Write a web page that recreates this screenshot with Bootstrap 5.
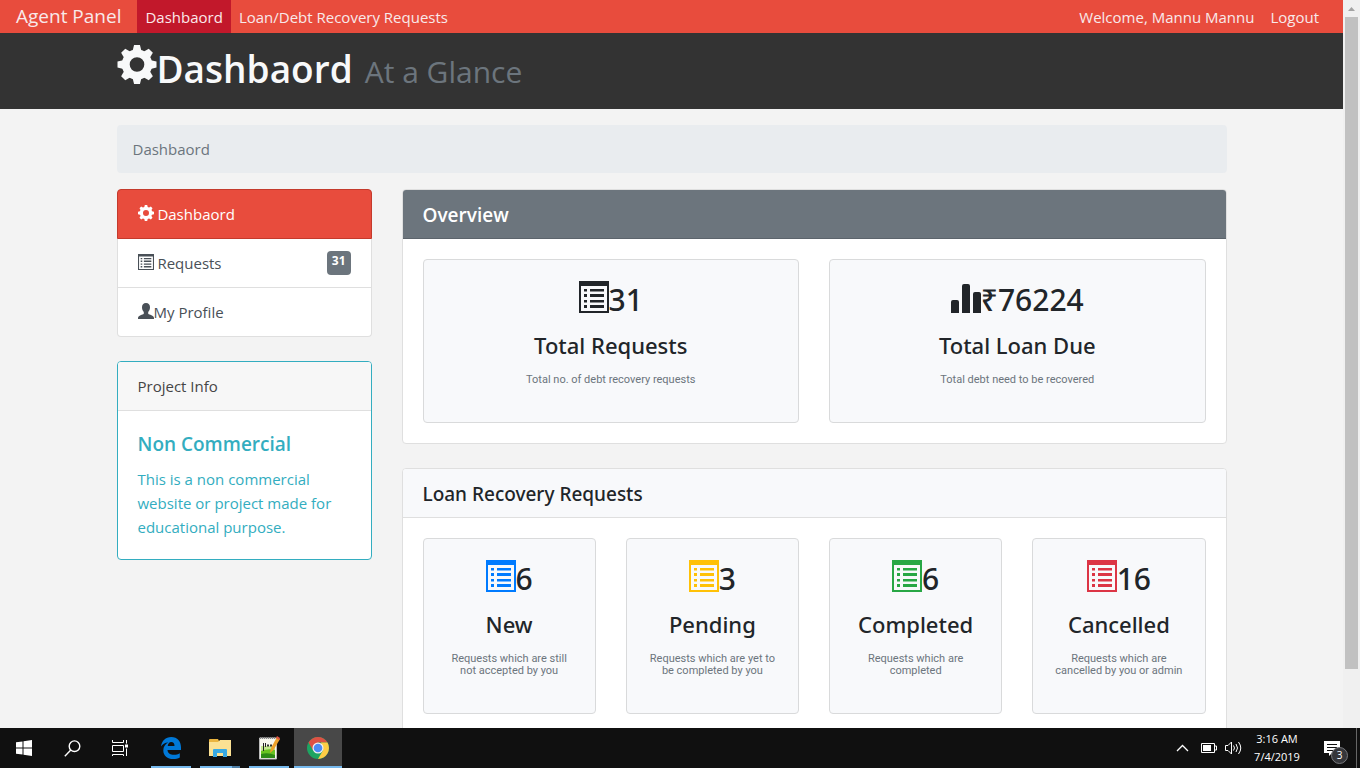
<!DOCTYPE html>
<html lang="en">
<head>
<meta charset="utf-8">
<meta name="viewport" content="width=device-width, initial-scale=1">
<title>Agent Panel</title>
<link href="https://cdn.jsdelivr.net/npm/bootstrap@5.3.0/dist/css/bootstrap.min.css" rel="stylesheet">
<style>
body{font-family:"Open Sans","Noto Sans",sans-serif;font-size:15px;line-height:24px;color:#212529;background:#f3f3f3}
.shell{height:100vh}
.viewport-area{min-height:0}
.page{min-width:0;overflow:hidden}
.page .container{--bs-gutter-x:30px}
.page .row{--bs-gutter-x:30px}
.topbar{background:#e84c3d;--bs-navbar-padding-y:0;--bs-navbar-padding-x:16px;height:33px}
.topbar .navbar-brand{font-size:19px;color:#f8e9ea;padding:0;margin-right:16px;line-height:35px}
.topbar .nav-link{color:#f8e9ea;padding:1px 8px 0;line-height:32px}
.topbar .nav-link.active{background:#c2182b;color:#fbe9ea}
.hero{background:#333;height:76px}
.hero h1{font-size:37px;line-height:48px;font-weight:600;color:#f8f9fa;padding-top:12px;margin:0}
.hero small{font-size:30px;font-weight:400;color:#6c757d;margin-left:12px}
.hero svg{width:40px;height:39px;align-self:flex-start}
.crumbs{background:#e9ecef;border-radius:4px;padding:12px 16px;margin:16px 0;color:#6c757d}
.crumbs .breadcrumb-item.active{color:#6c757d}
.side{--bs-list-group-item-padding-x:20px;--bs-list-group-item-padding-y:12px;--bs-list-group-border-radius:4px;--bs-list-group-border-color:#dfdfdf;--bs-list-group-active-bg:#e84c3d;--bs-list-group-active-border-color:#c43a2c;--bs-list-group-bg:#fff;margin-bottom:24px}
.side a{color:#495057}
.side svg{width:16px;height:16px;vertical-align:-1px}
.side .badge{font-size:12px;line-height:12px;padding:4px 5px 8px;border-radius:4px;background:#6c757d}
.panel{--bs-card-border-radius:4px;--bs-card-inner-border-radius:3px;--bs-card-border-color:#dfdfdf;--bs-card-cap-padding-x:20px;--bs-card-cap-padding-y:12px;--bs-card-spacer-x:20px;--bs-card-spacer-y:20px;margin-bottom:24px;--bs-card-bg:#fff}
.panel h2,.panel h3{font-size:19px;line-height:24px;margin:0}
.overview>.card-header,.recovery>.card-header{padding-top:13px;padding-bottom:11px}
.info{--bs-card-border-color:#33adc0;color:#33adc0}
.info .card-header{background:#f7f7f7;color:#454545;border-color:#dfdfdf}
.info h3{font-weight:600;line-height:26px;margin-bottom:10px}
.info p{margin-bottom:0}
.overview .card-header{background:#6c757d;color:#fff;border-color:#5c646c}
.overview .card-header h2{font-weight:600}
.soft,.recovery .card-header{background:#f8f9fb}
.recovery .card-header h2{font-family:"Noto Sans","Open Sans",sans-serif;font-weight:500}
.tile{--bs-card-border-radius:4px;--bs-card-border-color:#d9dadb;--bs-card-spacer-x:20px;--bs-card-spacer-y:20px;text-align:center;height:100%;font-family:"Noto Sans","Open Sans",sans-serif}
.tile .figure-line{font-size:30px;line-height:40px;font-weight:500;margin-bottom:10px;display:flex;justify-content:center}
.tile .figure-line svg{width:30px;height:32px;margin-top:1px}
.panel .tile h3{font-size:22px;line-height:30px;font-weight:500;margin-bottom:14px}
.tile p{font-family:Roboto,sans-serif;font-size:11px;line-height:12px;color:#6c757d;margin-bottom:16px}
.c-new svg{color:#007bff}.c-pend svg{color:#ffc107}.c-done svg{color:#28a745}.c-stop svg{color:#dc3545}
.scroller{width:17px;background:#f0f0f0;padding:0 2px;flex:none}
.scroller svg{display:block;width:13px;height:17px}
.scroller .thumb{height:calc(100% - 76px);background:#c1c1c1}
.taskbar{height:40px;background:#101010;color:#fff;flex:none}
.taskbar button{border:0;background:none;padding:0;width:48px;height:40px;color:#fff;display:flex;align-items:center;justify-content:center}
.taskbar .app{border-bottom:2px solid #76b9ed;width:40px;margin-left:9px;padding-top:2px}
.taskbar .app-first{margin-left:7px}
.taskbar .app-on{background:#484848;width:48px;margin-left:5px}
.taskbar .app-stack{border-image:linear-gradient(90deg,#76b9ed 78%,#4f7fa6 78%) 2}
.taskbar .tray{width:auto}
.clock{font-size:11px;line-height:18px;text-align:center;width:62px}
.notice{position:relative}
.notice .count{position:absolute;left:7px;top:6px;width:17px;height:17px;border-radius:50%;background:#35363a;border:1px solid #77787c;font-size:10px;line-height:15px;text-align:center}
.peek{width:4px;border-left:1px solid #666}
</style>
</head>
<body>
<svg width="0" height="0" class="position-absolute" aria-hidden="true">
<defs>
<g id="tooth"><path d="M-3-20H3L5-12H-5Z"/></g>
<symbol id="cog" viewBox="-20 -20 40 40"><g fill="currentColor"><circle r="11.5" fill="none" stroke="currentColor" stroke-width="8"/><use href="#tooth"/><use href="#tooth" transform="rotate(45)"/><use href="#tooth" transform="rotate(90)"/><use href="#tooth" transform="rotate(135)"/><use href="#tooth" transform="rotate(180)"/><use href="#tooth" transform="rotate(225)"/><use href="#tooth" transform="rotate(270)"/><use href="#tooth" transform="rotate(315)"/></g></symbol>
<symbol id="list" viewBox="0 0 30 32" preserveAspectRatio="none"><path fill="currentColor" fill-rule="evenodd" d="M0 0H30V32H0ZM2 5V30H28V5ZM5 8H8V10.500H5ZM11 8H25V10.500H11ZM5 13H8V16H5ZM11 13H25V16H11ZM5 19H8V21.500H5ZM11 19H25V21.500H11ZM5 24H8V27H5ZM11 24H25V27H11Z"/></symbol>
<symbol id="bars" viewBox="0 0 30 32"><path fill="currentColor" d="M0 32V21Q0 19 2 19H6Q8 19 8 21V32ZM11 32V5Q11 3 13 3H17Q19 3 19 5V32ZM22 32V13Q22 11 24 11H28Q30 11 30 13V32Z"/></symbol>
<symbol id="person" viewBox="0 0 16 16"><path fill="currentColor" d="M8 0c2.600 0 4 1.700 4 4.200 0 2-.7 3.600-1.800 4.800v1.400c0 .6 1 .9 2.200 1.400 2.400.9 3.600 1.800 3.600 3.200v1H0v-1c0-1.400 1.200-2.300 3.600-3.200 1.200-.5 2.200-.8 2.200-1.400V9C4.700 7.800 4 6.200 4 4.200 4 1.700 5.400 0 8 0Z"/></symbol>
</defs>
</svg>
<div class="shell d-flex flex-column">
<div class="viewport-area d-flex flex-grow-1">
<div class="page flex-grow-1">
  <nav class="navbar navbar-expand topbar px-3">
    <a class="navbar-brand" href="#">Agent Panel</a>
    <ul class="navbar-nav me-auto">
      <li class="nav-item"><a class="nav-link active" href="#">Dashbaord</a></li>
      <li class="nav-item"><a class="nav-link" href="#">Loan/Debt Recovery Requests</a></li>
    </ul>
    <ul class="navbar-nav">
      <li class="nav-item"><a class="nav-link" href="#">Welcome, Mannu Mannu</a></li>
      <li class="nav-item"><a class="nav-link" href="#">Logout</a></li>
    </ul>
  </nav>
  <header class="hero">
    <div class="container"><h1 class="d-flex align-items-baseline"><svg aria-hidden="true"><use href="#cog"/></svg>Dashbaord <small>At a Glance</small></h1></div>
  </header>
  <main class="container">
    <nav aria-label="breadcrumb"><ol class="breadcrumb crumbs"><li class="breadcrumb-item active">Dashbaord</li></ol></nav>
    <div class="row">
      <div class="col-3">
        <div class="list-group side">
          <a href="#" class="list-group-item list-group-item-action active"><svg aria-hidden="true"><use href="#cog"/></svg> Dashbaord</a>
          <a href="#" class="list-group-item list-group-item-action d-flex justify-content-between"><span><svg aria-hidden="true"><use href="#list"/></svg> Requests</span><span class="badge">31</span></a>
          <a href="#" class="list-group-item list-group-item-action"><svg aria-hidden="true"><use href="#person"/></svg>My Profile</a>
        </div>
        <div class="card panel info">
          <div class="card-header">Project Info</div>
          <div class="card-body"><h3>Non Commercial</h3><p>This is a non commercial website or project made for educational purpose.</p></div>
        </div>
      </div>
      <div class="col-9">
        <section class="card panel overview">
          <div class="card-header"><h2>Overview</h2></div>
          <div class="card-body"><div class="row">
            <div class="col-6"><div class="card tile soft"><div class="card-body"><div class="figure-line"><svg aria-hidden="true"><use href="#list"/></svg>31</div><h3>Total Requests</h3><p>Total no. of debt recovery requests</p></div></div></div>
            <div class="col-6"><div class="card tile soft"><div class="card-body"><div class="figure-line"><svg aria-hidden="true"><use href="#bars"/></svg>₹76224</div><h3>Total Loan Due</h3><p>Total debt need to be recovered</p></div></div></div>
          </div></div>
        </section>
        <section class="card panel recovery">
          <div class="card-header"><h2>Loan Recovery Requests</h2></div>
          <div class="card-body"><div class="row">
            <div class="col-3"><div class="card tile soft c-new"><div class="card-body"><div class="figure-line"><svg aria-hidden="true"><use href="#list"/></svg>6</div><h3>New</h3><p>Requests which are still not accepted by you</p></div></div></div>
            <div class="col-3"><div class="card tile soft c-pend"><div class="card-body"><div class="figure-line"><svg aria-hidden="true"><use href="#list"/></svg>3</div><h3>Pending</h3><p>Requests which are yet to be completed by you</p></div></div></div>
            <div class="col-3"><div class="card tile soft c-done"><div class="card-body"><div class="figure-line"><svg aria-hidden="true"><use href="#list"/></svg>6</div><h3>Completed</h3><p>Requests which are completed</p></div></div></div>
            <div class="col-3"><div class="card tile soft c-stop"><div class="card-body"><div class="figure-line"><svg aria-hidden="true"><use href="#list"/></svg>16</div><h3>Cancelled</h3><p>Requests which are cancelled by you or admin</p></div></div></div>
          </div></div>
        </section>
      </div>
    </div>
  </main>
</div>
<div class="scroller" aria-hidden="true"><svg viewBox="0 0 13 17"><path d="M3 11L6.500 7L10 11Z" fill="#a3a3a3"/></svg><div class="thumb"></div></div>
</div>
<footer class="taskbar d-flex">
  <button type="button" aria-label="Start"><svg width="16" height="16"><path fill="#fff" d="M0 2.300L6.500 1.400V7.500H0ZM7.500 1.200L16 0V7.500H7.500ZM0 8.500H6.500V14.600L0 13.700ZM7.500 8.500H16V16L7.500 14.800Z"/></svg></button>
  <button type="button" aria-label="Search"><svg width="17" height="17" fill="none" stroke="#fff" stroke-width="1.400"><circle cx="10.500" cy="6.200" r="5.300"/><path d="M6.800 10L.8 16.200"/></svg></button>
  <button type="button" aria-label="Task view"><svg width="17" height="16" fill="none" stroke="#fff"><path d="M.5 0V2.500H11.500V0M.5 5.500H11.500V11.500H.5ZM.5 16V14.500H11.500V16M14.500 0V3.500M14.500 8.500V16" /><path d="M13 6H16" stroke-width="3"/></svg></button>
  <button type="button" class="app app-first" aria-label="Edge"><svg width="20" height="22" viewBox="0 0 20 22"><path fill="#0078d7" d="M0 9.500C.7 4 4.500 0 10.300 0 16.500 0 20 4.500 20 10.300V13H6.500c.2 3.500 3.200 4.800 6.400 4.800 2.300 0 4.200-.6 5.900-1.600v4.300C17 21.500 14.700 22 12.200 22 6.500 22 2.300 18.700 2.300 13.400c0-3.400 1.900-6.300 5-7.800C3.900 5.700 1.400 7.500 0 9.500ZM6.700 9H13.500c0-2.600-1.100-4-3.300-4C8.200 5 7 6.700 6.700 9Z"/></svg></button>
  <button type="button" class="app app-stack" aria-label="File Explorer"><svg width="22" height="18"><path fill="#eab43f" d="M0 1Q0 0 1 0H9L10 2V4H0Z"/><path fill="#fbe193" d="M0 3H9L11 1H22V17H0Z"/><path fill="#38a9e4" d="M4 18V11Q4 10 5 10H17Q18 10 18 11V18H14V14H8V18Z"/></svg></button>
  <button type="button" class="app" aria-label="Notepad++"><svg width="22" height="24"><path fill="#f7f7ee" stroke="#bbb" d="M1.500 2H18.500V23H1.500Z"/><path d="M3 10H17V17H3Z" fill="#c3e88d"/><path d="M3 15Q10 12 17 14V21H3Z" fill="#69c322"/><path d="M3 18Q10 16 17 19V22H3Z" fill="#2d8a16"/><path d="M2 2H18" stroke="#888" stroke-width="2" stroke-dasharray="1 1"/><path d="M5.500 7V15M7.500 7V11" stroke="#222"/><path d="M9 9.500H11M12 9.500H14" stroke="#333" stroke-width="2"/><path d="M12 17L13 12L19 1L22 3L15.500 14Z" fill="#efa22b"/><path d="M18 2L19 0L22 2L21 4Z" fill="#d54"/></svg></button>
  <button type="button" class="app app-on" aria-label="Chrome"><svg width="22" height="22" viewBox="-11 -11 22 22"><circle r="11" fill="#1da462"/><path fill="#dd5144" d="M-9.500-5.500A11 11 0 0 1 9.500-5.500H0L-4.800 2.700Z"/><path fill="#ffcd46" d="M9.500-5.500A11 11 0 0 1 0 11L4.800 2.800L3-5.500Z"/><circle r="5.500" fill="#f1f1f1"/><circle r="4.300" fill="#4c8bf5"/></svg></button>
  <div class="ms-auto d-flex align-items-center">
    <button type="button" class="tray" aria-label="Show hidden icons"><svg width="13" height="8" fill="none" stroke="#fff" stroke-width="1.300"><path d="M1 7L6.500 1.500L12 7"/></svg></button>
    <button type="button" class="tray ms-2 ps-1" aria-label="Battery"><svg width="16" height="10"><path d="M.5 .5H13.500V9.500H.5ZM14 3H15.500V7H14" fill="none" stroke="#fff"/><path d="M2 2H10V8H2Z" fill="#fff"/></svg></button>
    <button type="button" class="tray ms-2" aria-label="Volume"><svg width="17" height="14" fill="none" stroke="#fff"><path d="M.5 4.500H3L6.500 1V13L3 9.500H.5ZM8.500 4.500Q10.500 7 8.500 9.500M11 3Q14 7 11 11M13.500 1Q18 7 13.500 13"/></svg></button>
    <div class="clock ms-1">3:16 AM<br>7/4/2019</div>
    <button type="button" class="tray ms-3 me-2" aria-label="Notifications"><span class="notice d-flex"><svg width="16" height="15"><path fill="#fff" d="M0 0H16V12H8L5 15V12H0Z"/><path d="M3 3.500H13M3 6.500H13M3 9.500H9" stroke="#101010"/></svg><span class="count">3</span></span></button>
    <div class="peek align-self-stretch ms-2"></div>
  </div>
</footer>
</div>
<script src="https://cdn.jsdelivr.net/npm/bootstrap@5.3.0/dist/js/bootstrap.bundle.min.js"></script>
</body>
</html>
